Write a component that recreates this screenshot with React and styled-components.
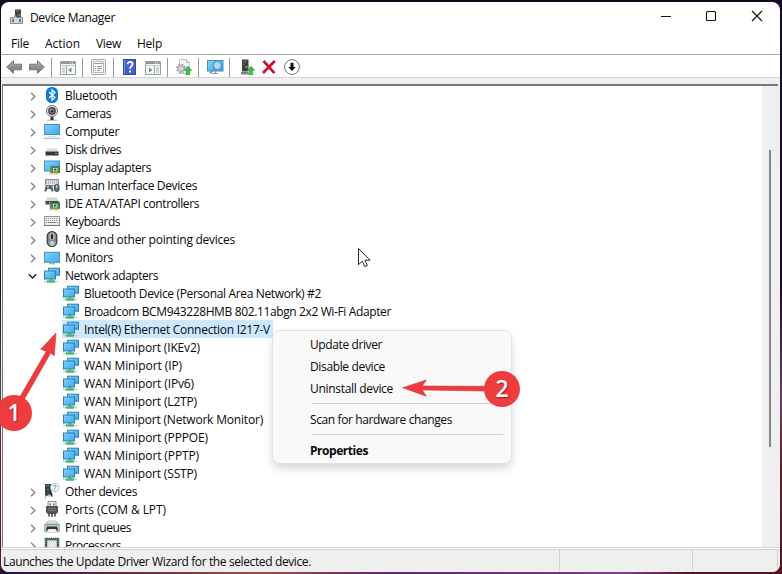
import React, { useLayoutEffect, useRef, useState } from "react"
import styled, { createGlobalStyle } from "styled-components"

const colors = {
  text: "#080808",
  panel: "#efefef",
  line: "#a6a6a6",
  lineLight: "#d4d4d4",
  selected: "#cce8ff",
  red: "#ee3b3e",
}

const GlobalStyle = createGlobalStyle`
  * {
    box-sizing: border-box;
  }

  body {
    margin: 0;
    overflow: hidden;
    font-family: "Open Sans", "Noto Sans", sans-serif;
    font-size: 12px;
    color: ${colors.text};
  }

  svg {
    display: block;
    flex: none;
  }
`

const Desktop = styled.div`
  position: relative;
  width: 782px;
  height: 574px;
  padding: 2px 2px 2px 1px;
  overflow: hidden;
  background:
    linear-gradient(90deg, #23123c, #a04a48 33%, #5c2a68 50%, #7c3f86 80%, #5a1225 88%) bottom / 100% 4px no-repeat,
    linear-gradient(#170b24 0%, #1b0d24 50%, #67405e 70%, #6a1c2c 80%, #591224 100%);
`

const Window = styled.div`
  display: flex;
  flex-direction: column;
  height: 570px;
  border-radius: 8px;
  overflow: hidden;
  background: #fff;
`

const TitleBar = styled.div`
  display: flex;
  align-items: center;
  height: 30px;
  padding: 0 17px 0 8px;
`

const Title = styled.div`
  flex: 1;
  padding-left: 5px;
`

const Controls = styled.div`
  display: flex;
  gap: 34px;
  padding-bottom: 2px;
`

const MenuBar = styled.div`
  display: flex;
  align-items: center;
  gap: 16px;
  height: 22px;
  padding: 1px 10px 0;
`

const Toolbar = styled.div`
  display: flex;
  align-items: center;
  height: 24px;
  padding: 2px 0 0 5px;
  border-top: 1px solid ${colors.line};
  border-bottom: 1px solid ${colors.lineLight};
`

const Tool = styled.div`
  margin-right: ${(p) => p.$gap || 7}px;
`

const Divider = styled.div`
  width: 1px;
  height: 19px;
  margin-right: 8px;
  background: #9a9a9a;
`

const Body = styled.div`
  display: flex;
  flex: 1;
  min-height: 0;
  padding: 6px 2px 0 1px;
  background: ${colors.panel};
`

const Pane = styled.div`
  display: flex;
  flex: 1;
  border-top: 2px solid #777;
  border-left: 1px solid #777;
  background: #fff;
`

const Tree = styled.div`
  flex: 1;
  overflow: hidden;
`

const Row = styled.div`
  display: flex;
  align-items: center;
  height: 18px;
  padding-left: ${(p) => (p.$child ? 59 : 25)}px;
`

const Highlight = styled.div`
  display: flex;
  align-items: center;
  gap: 5px;
  height: 18px;
  padding: 0 3px 0 1px;
  background: ${(p) => (p.$selected ? colors.selected : "none")};

  span {
    margin-top: 2px;
  }
`

const Chevron = styled.svg`
  margin: 3px 6px 0 0;
`

const ScrollBar = styled.div`
  width: 16px;
  padding: 64px 0 0 7px;
  background: ${colors.panel};
`

const Thumb = styled.div`
  width: 2px;
  height: 297px;
  background: #858585;
`

const StatusBar = styled.div`
  display: flex;
  height: 25px;
  padding: 2px 2px 1px 2px;
  border-top: 1px solid ${colors.lineLight};
  background: linear-gradient(#fff 0 1px, #d0d0d0 1px 2px, ${colors.panel} 2px);
`

const StatusCell = styled.div`
  display: flex;
  align-items: center;
  flex: ${(p) => (p.$width ? `0 0 ${p.$width}px` : "1")};
  padding-top: 2px;
  border-right: 1px solid #cfcfcf;
`

const ContextMenu = styled.div`
  position: absolute;
  left: 272px;
  top: 330px;
  width: 240px;
  height: 134px;
  padding: 2px 8px 0 37px;
  border: 1px solid #e2e2e2;
  border-radius: 8px;
  background: #f9f9f9;
  box-shadow: 0 5px 8px rgba(0, 0, 0, 0.15);
`

const MenuItem = styled.div`
  display: flex;
  align-items: center;
  height: 22px;
  padding-top: 2px;
  font-weight: ${(p) => (p.$bold ? 700 : 400)};
`

const MenuRule = styled.div`
  height: 1px;
  margin: 4px 0 4px 2px;
  background: #cfcfcf;
`

const Overlay = styled.svg`
  position: absolute;
  left: 0;
  top: 0;
  pointer-events: none;
`

const Badge = styled.div`
  position: absolute;
  left: ${(p) => p.$x}px;
  top: ${(p) => p.$y}px;
  width: 36px;
  height: 36px;
  border-radius: 50%;
  background: ${colors.red};
  color: #fff;
  font: 600 23px/34px "Open Sans", sans-serif;
  text-align: center;
  text-shadow: 1px 1px 1px rgba(80, 0, 0, 0.45);
`

const LabelText = styled.span`
  display: inline-block;
  line-height: 16px;
  white-space: pre;
`

// Spreads the letters so that the label takes a fixed width.
const Label = ({ text, width }) => {
  const ref = useRef(null)
  const [spacing, setSpacing] = useState(0)

  useLayoutEffect(() => {
    const natural = ref.current.getBoundingClientRect().width
    setSpacing((width - natural) / text.length)
  }, [text, width])

  return (
    <LabelText ref={ref} style={{ letterSpacing: spacing }}>
      {text}
    </LabelText>
  )
}

const Icon = ({ children, w = 16, h = 16 }) => (
  <svg width={w} height={h} viewBox={`0 0 ${w} ${h}`}>
    {children}
  </svg>
)

const Gradients = () => (
  <Overlay width="0" height="0">
    <defs>
      <linearGradient id="screen" x1="0" y1="0" x2="1" y2="1">
        <stop offset="0" stopColor="#86d4fb" />
        <stop offset="0.5" stopColor="#5dbdf5" />
        <stop offset="1" stopColor="#3fabef" />
      </linearGradient>
      <linearGradient id="arrow" x1="0" y1="0" x2="0" y2="1">
        <stop offset="0" stopColor="#bdbdbd" />
        <stop offset="0.5" stopColor="#8f8f8f" />
        <stop offset="1" stopColor="#777" />
      </linearGradient>
      <linearGradient id="metal" x1="0" y1="0" x2="1" y2="0">
        <stop offset="0" stopColor="#6d7276" />
        <stop offset="0.5" stopColor="#d2d6d9" />
        <stop offset="1" stopColor="#6d7276" />
      </linearGradient>
    </defs>
  </Overlay>
)

const Chip = () => (
  <>
    <path d="M6.5 7.5H16v6H6.5z" fill="#3c8a58" stroke="#2a6642" strokeWidth=".6" />
    <path d="M5.3 6.5h1v9h-1z" fill="#b5b5a5" />
    <path d="M9 9h4.5v3.4H9z" fill="#d3dcb3" />
    <path d="M10 9.8h2.3v1.8H10z" fill="#344b3c" />
    <path d="M7 13.8h2v1.8H7zM10 13.8h4v1.6h-4z" fill="#e5b94b" />
  </>
)

const Keys = ({ y = 5 }) => (
  <path
    d={`M2 ${y}h12M2 ${y + 2}h12`}
    stroke="#8a8a8a"
    strokeWidth="1"
    strokeDasharray="1 1"
  />
)

const icons = {
  bluetooth: (
    <>
      <rect x="2" y="0" width="12" height="16" rx="5.5" fill="#0a7bd8" />
      <path d="M5 5l6 5.5L8 13.2V2.8L11 5.5 5 11" fill="none" stroke="#fff" strokeWidth="1.2" />
    </>
  ),
  camera: (
    <>
      <path d="M3 15.2h10" stroke="#aaa" strokeWidth="1" />
      <path d="M6.5 11h3v4h-3z" fill="#333" />
      <circle cx="8" cy="6" r="5.6" fill="#dcdcdc" stroke="#808080" />
      <circle cx="8" cy="6" r="3.2" fill="#777" stroke="#4b4b4b" strokeWidth="1.4" />
      <circle cx="8" cy="6" r="1.3" fill="#222" />
      <circle cx="7.2" cy="5" r=".7" fill="#ddd" />
    </>
  ),
  computer: (
    <>
      <rect x=".5" y="1.5" width="15" height="10" fill="url(#screen)" stroke="#4a90bd" />
      <path d="M4 13.5h8" stroke="#d4dde2" />
      <path d="M0 15.3h16" stroke="#88949b" strokeWidth=".8" />
    </>
  ),
  disk: (
    <>
      <path d="M3.5 7.5h9l2 3h-13z" fill="#dadada" />
      <path d="M1.5 10.5h13v4h-13z" fill="#333738" />
      <path d="M11 12.5h2" stroke="#58d46a" />
    </>
  ),
  display: (
    <>
      <rect x=".5" y="2" width="15" height="10" fill="url(#screen)" stroke="#4a90bd" />
      <Chip />
    </>
  ),
  hid: (
    <>
      <path d="M1.5 2.5h13v6h-13z" fill="#e5e5e5" stroke="#8a8a8a" />
      <Keys y={4} />
      <path d="M.5 14.5c0-4 1-6 3-6h3c2 0 3 3 3 6H7.8L6.5 12h-3l-1.3 2.5z" fill="#59646c" />
      <path d="M3 10h2M4 9v2" stroke="#d1e9f8" strokeWidth=".7" />
      <rect x="10.5" y="7.5" width="4.5" height="7" rx="2.2" fill="#687780" stroke="#394349" />
      <path d="M12.8 8v3" stroke="#c9e6f3" />
    </>
  ),
  ide: (
    <>
      <path d="M3.5 2.5h9L15 6H1z" fill="#d6d6d6" />
      <path d="M1.5 6h13v3.5h-13z" fill="#404545" />
      <Chip />
    </>
  ),
  keyboard: (
    <>
      <path d="M.5 3.5h15v9H.5z" fill="#ececec" stroke="#959595" />
      <Keys y={5.5} />
      <path d="M2 9.5h1m1 0h8m1 0h1" stroke="#888" />
      <path d="M0 12.5h16" stroke="#777" />
    </>
  ),
  mouse: (
    <>
      <rect x="3.2" y=".7" width="9.6" height="14.8" rx="4.6" fill="url(#metal)" stroke="#383b40" strokeWidth="1.2" />
      <path d="M8 1v3M3.5 8.5c3 1.2 6 1.2 9 0" fill="none" stroke="#50565a" strokeWidth=".7" />
      <rect x="7" y="3.2" width="2" height="5" rx="1" fill="#222" />
    </>
  ),
  monitor: (
    <>
      <rect x=".5" y="3.3" width="15" height="10" fill="url(#screen)" stroke="#4a90bd" />
      <path d="M5 14.8h6" stroke="#8b999f" />
    </>
  ),
  network: (
    <>
      <path d="M0 14.5h14" stroke="#c3cbc4" strokeWidth="1.4" />
      <path d="M3 14.5h8M7 11v3" stroke="#4dbb6c" strokeWidth="2.4" />
      <rect x="4.6" y="1.2" width="10.9" height="7" fill="url(#screen)" stroke="#2f7fb0" />
      <rect x=".5" y="4" width="11" height="8" fill="url(#screen)" stroke="#2f7fb0" />
    </>
  ),
  other: (
    <>
      <path d="M1 1h6.5v12H1z" fill="#354640" />
      <path d="M1 12h1v4H1zM3.5 11.5h3.5v2H3.5z" fill="#bbb" />
      <path d="M2 2.5h4M3 6.5h2" stroke="#65766e" />
      <path d="M5.5 9.5c2 0 2.5 2 2.5 4" fill="none" stroke="#222" strokeWidth="1.4" />
      <circle cx="10.8" cy="4.5" r="4.3" fill="#f8fbfc" stroke="#9caeb8" strokeWidth=".8" />
      <path d="M9.4 3.6c.2-2 3.2-1.6 2.8 0-.2.8-1.4.9-1.4 2M10.8 6.3v1" fill="none" stroke="#278bb8" strokeWidth="1" />
    </>
  ),
  port: (
    <>
      <path d="M4 .5h8v5H4z" fill="#eee" stroke="#929292" />
      <path d="M5.5 2.5h1.3v2H5.5zm3.6 0h1.3v2H9.1z" fill="#606060" />
      <path d="M2 5h12v6.5l-2 1.5H4l-2-1.5z" fill="#555" />
      <path d="M4 7.5h8M4 9.5h8" stroke="#888" strokeWidth=".7" />
      <path d="M5 12.5v3M8 12.5v3.5M11 12.5v3" stroke="#444" strokeWidth="1.5" />
    </>
  ),
  printer: (
    <>
      <path d="M3.5 2h9l2 4h-13z" fill="#e3e3e3" stroke="#a1a1a1" strokeWidth=".6" />
      <rect x=".5" y="5" width="15" height="8" rx="1" fill="#c0c4c4" stroke="#888" strokeWidth=".6" />
      <path d="M1 5.5h14" stroke="#6fa798" strokeWidth="1" />
      <path d="M3 7.5h10l1 4H2z" fill="#303738" />
      <path d="M4.5 10h7l1.5 3H3z" fill="#f2f2f2" />
    </>
  ),
  processor: (
    <>
      <path d="M1 1.2h14M1 14.8h14M1.2 1v14M14.8 1v14" stroke="#61846a" strokeWidth="1.6" strokeDasharray="1 1" />
      <path d="M2.2 2.2h11.6v11.6H2.2z" fill="#dce2dc" stroke="#39654b" strokeWidth="2" />
      <path d="M5 5h6v6H5z" fill="#e9e9e6" />
    </>
  ),
}

const UpArrow = ({ x = 11 }) => (
  <path d={`M${x + 3} 7l4 4.5h-2v1.2H${x + 1}v-1.2h-2zm-2 6.2h4v1.2h-4zm0 1.8h4v1h-4z`} fill="#3cbd50" stroke="#2f9e42" strokeWidth=".4" />
)

const Console = ({ left }) => (
  <Icon w={17} h={16}>
    <path d="M.5 2.5h15v13H.5z" fill="#f7f8f8" stroke="#9ba0a4" />
    <path d="M1 3h14v2H1z" fill="#8f979d" />
    <path d="M10 4h1m1 0h1" stroke="#fff" />
    <path d="M1 6.5h14" stroke="#c5cacd" />
    <path d={left ? "M6.5 7v8" : "M9.5 7v8"} stroke="#9ba0a4" />
    <path d={left ? "M2 9h3M2 11h3M2 13h3" : "M11 9h3M11 11h3M11 13h3"} stroke="#a3abb0" />
    <path d={left ? "M11.5 8.5v5L8 11z" : "M4 8.5v5L7.5 11z"} fill="#52ab4c" />
  </Icon>
)

const AppIcon = () => (
  <Icon>
    <path d="M6 .5h6v9H6z" fill="#414447" />
    <path d="M7 2h3" stroke="#7b7f83" />
    <path d="M9.5 6h2" stroke="#b8bcbf" />
    <path d="M1.5 8.5h4v-2h1.5v2h6.5v6h-12z" fill="#d4d7d9" stroke="#8a8e91" />
    <path d="M4 10v3M11 10v3" stroke="#53585c" strokeWidth="1.5" />
  </Icon>
)

const rows = [
  ["bluetooth", "Bluetooth", 52],
  ["camera", "Cameras", 46],
  ["computer", "Computer", 54],
  ["disk", "Disk drives", 56],
  ["display", "Display adapters", 86],
  ["hid", "Human Interface Devices", 132],
  ["ide", "IDE ATA/ATAPI controllers", 134],
  ["keyboard", "Keyboards", 55],
  ["mouse", "Mice and other pointing devices", 170],
  ["monitor", "Monitors", 48],
  ["network", "Network adapters", 93],
  ["network", "Bluetooth Device (Personal Area Network) #2", 237, true],
  ["network", "Broadcom BCM943228HMB 802.11abgn 2x2 Wi-Fi Adapter", 307, true],
  ["network", "Intel(R) Ethernet Connection I217-V", 186, true],
  ["network", "WAN Miniport (IKEv2)", 116, true],
  ["network", "WAN Miniport (IP)", 98, true],
  ["network", "WAN Miniport (IPv6)", 110, true],
  ["network", "WAN Miniport (L2TP)", 113, true],
  ["network", "WAN Miniport (Network Monitor)", 179, true],
  ["network", "WAN Miniport (PPPOE)", 124, true],
  ["network", "WAN Miniport (PPTP)", 115, true],
  ["network", "WAN Miniport (SSTP)", 113, true],
  ["other", "Other devices", 72],
  ["port", "Ports (COM & LPT)", 101],
  ["printer", "Print queues", 66],
  ["processor", "Processors", 56],
]

const TreeRow = ({ icon, text, width, child }) => {
  const open = text === "Network adapters"
  return (
    <Row $child={child}>
      {!child && (
        <Chevron width="9" height="9" viewBox="0 0 9 9">
          <path
            d={open ? "M.8 2.3l3.7 3.7 3.7-3.7" : "M3 .8l3.8 3.7L3 8.2"}
            fill="none"
            stroke={open ? "#222" : "#8a8a8a"}
            strokeWidth="1.5"
          />
        </Chevron>
      )}
      <Highlight $selected={text.startsWith("Intel")}>
        <Icon>{icons[icon]}</Icon>
        <Label text={text} width={width} />
      </Highlight>
    </Row>
  )
}

const ToolbarIcons = () => (
  <Toolbar>
    <Tool>
      <Icon>
        <path d="M.7 8L7.5 1.7v3.5h8v5.6h-8v3.5z" fill="url(#arrow)" stroke="#777" />
      </Icon>
    </Tool>
    <Tool $gap={6}>
      <Icon>
        <path d="M15.3 8L8.5 1.7v3.5h-8v5.6h8v3.5z" fill="url(#arrow)" stroke="#777" />
      </Icon>
    </Tool>
    <Divider />
    <Tool $gap={5}>
      <Console left />
    </Tool>
    <Divider />
    <Tool $gap={6}>
      <Icon>
        <rect x=".5" y=".5" width="14" height="15" rx="1" fill="#f3f4f5" stroke="#a0a4a7" />
        <path d="M2.5 2.5h10v11h-10z" fill="#fff" stroke="#b4b9bd" />
        <path d="M3 4.5h9" stroke="#969da3" />
        <path d="M4 7.5h1m1 0h5M4 9.5h1m1 0h5M4 11.5h1m1 0h3" stroke="#8b979f" />
      </Icon>
    </Tool>
    <Divider />
    <Tool $gap={8}>
      <Icon w={15}>
        <rect x="1.5" y=".5" width="12" height="15" fill="#4562bf" stroke="#33499a" />
        <path d="M2.5 1v14" stroke="#7893d8" />
        <path d="M5.7 5.2c0-3.2 5-3 4.8.1C10.4 7.4 8.1 7.2 8.1 9.7M8.1 11.5v2" fill="none" stroke="#fff" strokeWidth="1.8" />
      </Icon>
    </Tool>
    <Tool $gap={5}>
      <Console />
    </Tool>
    <Divider />
    <Tool $gap={5}>
      <Icon w={17}>
        <path d="M3.5.5h7l3 3v11h-10z" fill="#f7f7f7" stroke="#c5c5c5" />
        <path d="M10.5.5v3h3" fill="none" stroke="#bbb" />
        <circle cx="5" cy="9.5" r="4.1" fill="none" stroke="#9a9d9f" strokeWidth="1.6" strokeDasharray="1.9 1.32" />
        <circle cx="5" cy="9.5" r="3" fill="#ddd" stroke="#9a9d9f" />
        <circle cx="5" cy="9.5" r="1.2" fill="#fff" stroke="#9d9d9d" strokeWidth=".6" />
        <UpArrow x={9} />
      </Icon>
    </Tool>
    <Divider />
    <Tool $gap={5}>
      <Icon w={17}>
        <rect x=".5" y="1.5" width="15.5" height="10.5" fill="url(#screen)" stroke="#3f8fbf" />
        <path d="M8.5 12v2M5 14.5h6" stroke="#899da8" />
        <path d="M8 9l-5 5.5" stroke="#7c8d97" strokeWidth="1.7" />
        <circle cx="10.3" cy="6.5" r="4" fill="#a5defa" stroke="#5d90ac" strokeWidth="1.2" />
      </Icon>
    </Tool>
    <Divider />
    <Tool $gap={5}>
      <Icon w={18}>
        <path d="M4 .5h6.5v12H4z" fill="#39423e" />
        <path d="M5 2.5h3M5 5h2" stroke="#6b7670" />
        <path d="M7.5 8h2" stroke="#b4eab5" />
        <path d="M3 13h7l1 1v1.5H3z" fill="#7c8581" />
        <UpArrow x={10} />
      </Icon>
    </Tool>
    <Tool>
      <Icon>
        <path d="M2.5 2l11 12.2M13.8 2L2 14" stroke="#c91429" strokeWidth="2.7" />
      </Icon>
    </Tool>
    <Tool>
      <Icon>
        <circle cx="8" cy="8" r="7.4" fill="#fff" stroke="#777" />
        <path d="M6.5 3.8h3V8h2.3L8 12 4.2 8h2.3z" fill="#111" />
      </Icon>
    </Tool>
  </Toolbar>
)

const App = () => (
  <Desktop>
    <GlobalStyle />
    <Gradients />
    <Window>
      <TitleBar>
        <AppIcon />
        <Title>
          <Label text="Device Manager" width={85} />
        </Title>
        <Controls>
          <Icon w={12} h={12}>
            <path d="M2 6.5h10" stroke="#111" />
          </Icon>
          <Icon w={12} h={12}>
            <rect x="1.5" y="1.5" width="9" height="9" rx="1" fill="none" stroke="#111" strokeWidth="1.1" />
          </Icon>
          <Icon w={12} h={12}>
            <path d="M1 1l10 10M11 1L1 11" stroke="#111" strokeWidth="1.1" />
          </Icon>
        </Controls>
      </TitleBar>
      <MenuBar>
        <Label text="File" width={18} />
        <Label text="Action" width={35} />
        <Label text="View" width={25} />
        <Label text="Help" width={25} />
      </MenuBar>
      <ToolbarIcons />
      <Body>
        <Pane>
          <Tree>
            {rows.map(([icon, text, width, child]) => (
              <TreeRow key={text} icon={icon} text={text} width={width} child={child} />
            ))}
          </Tree>
          <ScrollBar>
            <Thumb />
          </ScrollBar>
        </Pane>
      </Body>
      <StatusBar>
        <StatusCell $width={557}>
          <Label text="Launches the Update Driver Wizard for the selected device." width={308} />
        </StatusCell>
        <StatusCell $width={133} />
        <StatusCell />
      </StatusBar>
    </Window>

    <ContextMenu>
      <MenuItem>
        <Label text="Update driver" width={72} />
      </MenuItem>
      <MenuItem>
        <Label text="Disable device" width={75} />
      </MenuItem>
      <MenuItem>
        <Label text="Uninstall device" width={83} />
      </MenuItem>
      <MenuRule />
      <MenuItem>
        <Label text="Scan for hardware changes" width={142} />
      </MenuItem>
      <MenuRule />
      <MenuItem $bold>
        <Label text="Properties" width={58} />
      </MenuItem>
    </ContextMenu>

    <Overlay width="782" height="574" viewBox="0 0 782 574">
      <path
        d="M358.5 248.5v16.2l3.8-3.5 2.5 5.4 2.5-1.1-2.4-5.3h5.1z"
        fill="#fff"
        stroke="#222"
      />
      <g fill={colors.red} stroke="#c33a40" strokeWidth=".6">
        <path d="M56 333l-15.3 16.3 5.6 1.9L18 400l4.5 2.5L50.7 353l3.6 2.7z" />
        <path d="M402.7 387.7L426.3 380l-4 6 66 .3v4.8l-66-1.1 4 6.2z" />
      </g>
    </Overlay>
    <Badge $x={-4} $y={395}>
      1
    </Badge>
    <Badge $x={484} $y={371}>
      2
    </Badge>
  </Desktop>
)

export default App
